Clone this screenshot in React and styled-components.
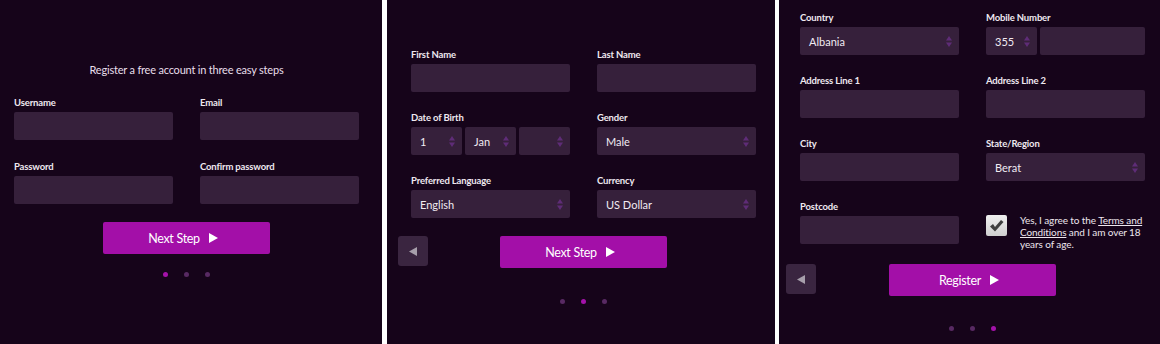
import styled, { createGlobalStyle } from "styled-components";

const GlobalStyle = createGlobalStyle`
    body {
        margin: 0;
        background: #ffffff;
        font-family: Lato, "Open Sans", sans-serif;
    }
`;

const Screens = styled.div`
    display: flex;
    width: 1160px;
    height: 344px;
    background: #ffffff;
    overflow: hidden;
`;

const Panel = styled.section`
    flex-shrink: 0;
    box-sizing: border-box;
    width: ${(p) => p.$width}px;
    height: 344px;
    margin-left: ${(p) => p.$gap || 0}px;
    padding: ${(p) => p.$top}px 0 0 ${(p) => p.$left}px;
    background: #16041a;
`;

const Content = styled.div`
    width: 345px;
    display: flex;
    flex-direction: column;
`;

const Title = styled.div`
    font-size: 11px;
    line-height: 14px;
    letter-spacing: -0.2px;
    color: #e8dfea;
    text-align: center;
    margin-bottom: 19px;
`;

const Grid = styled.div`
    display: grid;
    grid-template-columns: 159px 159px;
    column-gap: 27px;
    row-gap: ${(p) => p.$rowGap || 19}px;
`;

const Field = styled.div`
    display: flex;
    flex-direction: column;
`;

const Label = styled.div`
    height: 14px;
    margin-bottom: 2px;
    font-size: 9.5px;
    line-height: 14px;
    font-weight: 700;
    letter-spacing: -0.15px;
    color: #efe8f0;
    white-space: nowrap;
`;

const Input = styled.div`
    height: 28px;
    flex: ${(p) => (p.$grow ? "1" : "none")};
    background: #36203b;
    border-radius: 2px;
`;

const Select = styled.div`
    box-sizing: border-box;
    height: 28px;
    flex: ${(p) => (p.$width ? "none" : p.$grow ? "1" : "none")};
    width: ${(p) => (p.$width ? `${p.$width}px` : "auto")};
    display: flex;
    align-items: center;
    justify-content: space-between;
    padding: 0 7px 0 9px;
    background: #36203b;
    border-radius: 2px;
    font-size: 11px;
    color: #f1ebf2;
`;

const Group = styled.div`
    display: flex;
    gap: 3px;
`;

const ButtonRow = styled.div`
    display: grid;
    grid-template-columns: 1fr 167px 1fr;
    align-items: start;
    margin-top: ${(p) => p.$top}px;
`;

const BackButton = styled.button`
    justify-self: start;
    width: 30px;
    height: 30px;
    margin-left: ${(p) => p.$shift}px;
    padding: 0;
    border: none;
    border-radius: 3px;
    background: #3a2540;
    display: flex;
    align-items: center;
    justify-content: center;
`;

const PrimaryButton = styled.button`
    grid-column: 2;
    height: 32px;
    border: none;
    border-radius: 2px;
    background: #a30fa8;
    color: #ffffff;
    font-family: inherit;
    font-size: 12.5px;
    letter-spacing: -0.3px;
    display: flex;
    align-items: center;
    justify-content: center;
    gap: 9px;
    padding: 0 7px 0 0;
`;

const Dots = styled.div`
    display: flex;
    justify-content: center;
    gap: 16px;
    margin-top: ${(p) => p.$top}px;
`;

const Dot = styled.span`
    width: 5px;
    height: 5px;
    border-radius: 50%;
    background: ${(p) => (p.$active ? "#a412aa" : "#582a63")};
`;

const Agree = styled.div`
    height: 30px;
    display: flex;
    align-items: flex-start;
    gap: 13px;
    margin-top: 14px;
`;

const Check = styled.div`
    flex-shrink: 0;
    width: 21px;
    height: 21px;
    margin-top: 1px;
    border-radius: 2px;
    background: linear-gradient(#f0f0f0, #cfcfcf);
    display: flex;
    align-items: center;
    justify-content: center;
`;

const AgreeText = styled.div`
    font-size: 10px;
    line-height: 12px;
    letter-spacing: -0.1px;
    white-space: nowrap;
    color: #ede6ee;
    a {
        color: #ede6ee;
        text-decoration: underline;
    }
`;

function Arrows() {
    return (
        <svg width="6" height="11" viewBox="0 0 6 11">
            <polygon points="3,0 6,4.5 0,4.5" fill="#5e2c77" />
            <polygon points="0,6.5 6,6.5 3,11" fill="#5e2c77" />
        </svg>
    );
}

function Play() {
    return (
        <svg width="9" height="10" viewBox="0 0 9 10">
            <polygon points="0,0 9,5 0,10" fill="#ffffff" />
        </svg>
    );
}

function SelectBox({ value, width, grow }) {
    return (
        <Select $width={width} $grow={grow}>
            <span>{value}</span>
            <Arrows />
        </Select>
    );
}

function Footer({ label, back, rowTop, dotsTop, step }) {
    return (
        <>
            <ButtonRow $top={rowTop}>
                {back && (
                    <BackButton $shift={back}>
                        <svg width="8" height="9" viewBox="0 0 8 9">
                            <polygon points="8,0 8,9 0,4.5" fill="#a79fab" />
                        </svg>
                    </BackButton>
                )}
                <PrimaryButton>
                    {label}
                    <Play />
                </PrimaryButton>
            </ButtonRow>
            <Dots $top={dotsTop}>
                {[0, 1, 2].map((i) => (
                    <Dot key={i} $active={i === step} />
                ))}
            </Dots>
        </>
    );
}

function App() {
    return (
        <Screens>
            <GlobalStyle />
            <Panel $width={382} $top={63} $left={14}>
                <Content>
                    <Title>Register a free account in three easy steps</Title>
                    <Grid $rowGap={20}>
                        <Field>
                            <Label>Username</Label>
                            <Input />
                        </Field>
                        <Field>
                            <Label>Email</Label>
                            <Input />
                        </Field>
                        <Field>
                            <Label>Password</Label>
                            <Input />
                        </Field>
                        <Field>
                            <Label>Confirm password</Label>
                            <Input />
                        </Field>
                    </Grid>
                    <Footer label="Next Step" rowTop={18} dotsTop={18} step={0} />
                </Content>
            </Panel>
            <Panel $width={388} $gap={5} $top={48} $left={24}>
                <Content>
                    <Grid>
                        <Field>
                            <Label>First Name</Label>
                            <Input />
                        </Field>
                        <Field>
                            <Label>Last Name</Label>
                            <Input />
                        </Field>
                        <Field>
                            <Label>Date of Birth</Label>
                            <Group>
                                <SelectBox value="1" grow />
                                <SelectBox value="Jan" grow />
                                <SelectBox value="" grow />
                            </Group>
                        </Field>
                        <Field>
                            <Label>Gender</Label>
                            <SelectBox value="Male" />
                        </Field>
                        <Field>
                            <Label>Preferred Language</Label>
                            <SelectBox value="English" />
                        </Field>
                        <Field>
                            <Label>Currency</Label>
                            <SelectBox value="US Dollar" />
                        </Field>
                    </Grid>
                    <Footer label="Next Step" back={-13} rowTop={18} dotsTop={31} step={1} />
                </Content>
            </Panel>
            <Panel $width={381} $gap={4} $top={11} $left={21}>
                <Content>
                    <Grid>
                        <Field>
                            <Label>Country</Label>
                            <SelectBox value="Albania" />
                        </Field>
                        <Field>
                            <Label>Mobile Number</Label>
                            <Group>
                                <SelectBox value="355" width={51} />
                                <Input $grow />
                            </Group>
                        </Field>
                        <Field>
                            <Label>Address Line 1</Label>
                            <Input />
                        </Field>
                        <Field>
                            <Label>Address Line 2</Label>
                            <Input />
                        </Field>
                        <Field>
                            <Label>City</Label>
                            <Input />
                        </Field>
                        <Field>
                            <Label>State/Region</Label>
                            <SelectBox value="Berat" />
                        </Field>
                        <Field>
                            <Label>Postcode</Label>
                            <Input />
                        </Field>
                        <Agree>
                            <Check>
                                <svg width="15" height="13" viewBox="0 0 15 13">
                                    <path d="M1 7.5 L4 5 L6 8 L12 1 L14.5 3 L6 12.5 Z" fill="#3f3f3f" />
                                </svg>
                            </Check>
                            <AgreeText>
                                Yes, I agree to the <a href="#terms">Terms and</a>
                                <br />
                                <a href="#terms">Conditions</a> and I am over 18
                                <br />
                                years of age.
                            </AgreeText>
                        </Agree>
                    </Grid>
                    <Footer label="Register" back={-14} rowTop={20} dotsTop={30} step={2} />
                </Content>
            </Panel>
        </Screens>
    );
}

export default App;
